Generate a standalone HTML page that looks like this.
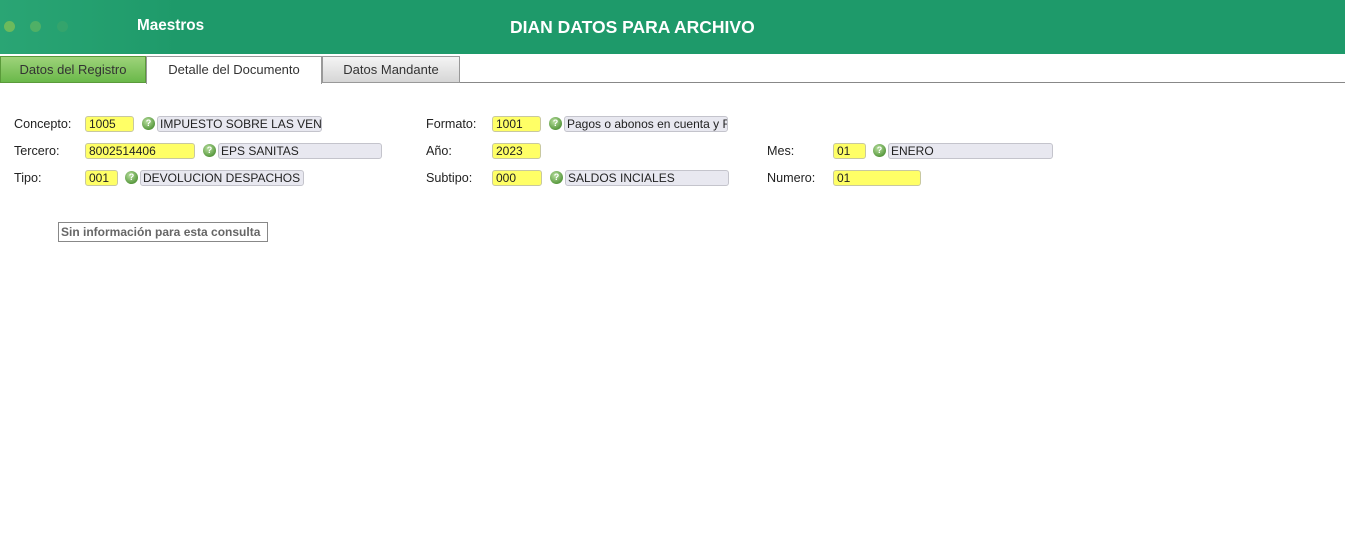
<!DOCTYPE html>
<html><head><meta charset="utf-8"><style>
*{margin:0;padding:0;box-sizing:border-box}
body{width:1345px;height:554px;background:#fff;position:relative;overflow:hidden;font-family:"Liberation Sans",Arial,sans-serif;font-size:12px;color:#222}
.hdr{position:absolute;left:0;top:0;width:1345px;height:54px;background:linear-gradient(90deg,#2aa574 0,#1e9a6a 180px,#1e9a6a 100%)}
.dot{position:absolute;top:21px;width:11px;height:11px;border-radius:50%}
.ab{position:absolute;white-space:nowrap}
.tab{position:absolute;top:56px;height:27px;font-size:13px;color:#333;text-align:center;line-height:25px;border:1px solid #999}
.lbl{position:absolute;font-size:12.6px;line-height:15px}
.in{position:absolute;height:16px;background:#ffff66;border:1px solid #c8c8a0;border-radius:3px;font-size:12px;line-height:14px;padding-left:3px;overflow:hidden}
.ds{position:absolute;height:16px;background:#e8e8f0;border:1px solid #c4c4cc;border-radius:3px;font-size:12px;line-height:14px;padding-left:2px;overflow:hidden;white-space:nowrap}
.ic{position:absolute;width:13px;height:13px;border-radius:50%;background:radial-gradient(circle at 40% 35%,#b9e0a0,#5a9a40 70%,#3f7a2e);color:#fff;font-size:9px;font-weight:bold;text-align:center;line-height:13px}
</style></head><body>
<div class="hdr">
<div class="dot" style="left:4px;background:#6cba5c"></div>
<div class="dot" style="left:30px;background:#4fb066"></div>
<div class="dot" style="left:57px;background:#34a46c"></div>
<div class="ab" style="left:137px;top:17px;color:#fff;font-weight:bold;font-size:15.3px">Maestros</div>
<div class="ab" style="left:510px;top:17px;color:#fff;font-weight:bold;font-size:17.5px">DIAN DATOS PARA ARCHIVO</div>
</div>
<div style="position:absolute;left:0;top:82px;width:1345px;height:1px;background:#888"></div>
<div class="tab" style="left:0;width:146px;background:linear-gradient(#9ed37a,#6ab84a);border-color:#5a9a3a">Datos del Registro</div>
<div class="tab" style="left:146px;width:176px;background:#fff;border-bottom:none;height:28px">Detalle del Documento</div>
<div class="tab" style="left:322px;width:138px;background:linear-gradient(#f4f4f4,#d6d6d6)">Datos Mandante</div>

<div class="lbl" style="left:14px;top:117px">Concepto:</div>
<div class="in" style="left:85px;top:116px;width:49px">1005</div>
<div class="ic" style="left:142px;top:117px">?</div>
<div class="ds" style="left:157px;top:116px;width:165px">IMPUESTO SOBRE LAS VEN</div>

<div class="lbl" style="left:14px;top:144px">Tercero:</div>
<div class="in" style="left:85px;top:143px;width:110px">8002514406</div>
<div class="ic" style="left:203px;top:144px">?</div>
<div class="ds" style="left:218px;top:143px;width:164px">EPS SANITAS</div>

<div class="lbl" style="left:14px;top:171px">Tipo:</div>
<div class="in" style="left:85px;top:170px;width:33px">001</div>
<div class="ic" style="left:125px;top:171px">?</div>
<div class="ds" style="left:140px;top:170px;width:164px">DEVOLUCION DESPACHOS Y</div>

<div class="lbl" style="left:426px;top:117px">Formato:</div>
<div class="in" style="left:492px;top:116px;width:49px">1001</div>
<div class="ic" style="left:549px;top:117px">?</div>
<div class="ds" style="left:564px;top:116px;width:164px">Pagos o abonos en cuenta y R</div>

<div class="lbl" style="left:426px;top:144px">Año:</div>
<div class="in" style="left:492px;top:143px;width:49px">2023</div>

<div class="lbl" style="left:426px;top:171px">Subtipo:</div>
<div class="in" style="left:492px;top:170px;width:50px">000</div>
<div class="ic" style="left:550px;top:171px">?</div>
<div class="ds" style="left:565px;top:170px;width:164px">SALDOS INCIALES</div>

<div class="lbl" style="left:767px;top:144px">Mes:</div>
<div class="in" style="left:833px;top:143px;width:33px">01</div>
<div class="ic" style="left:873px;top:144px">?</div>
<div class="ds" style="left:888px;top:143px;width:165px">ENERO</div>

<div class="lbl" style="left:767px;top:171px">Numero:</div>
<div class="in" style="left:833px;top:170px;width:88px">01</div>

<div class="ab" style="left:58px;top:222px;width:210px;height:20px;border:1px solid #888;color:#666;font-weight:bold;font-size:12px;line-height:18px;padding-left:2px">Sin información para esta consulta</div>
</body></html>
